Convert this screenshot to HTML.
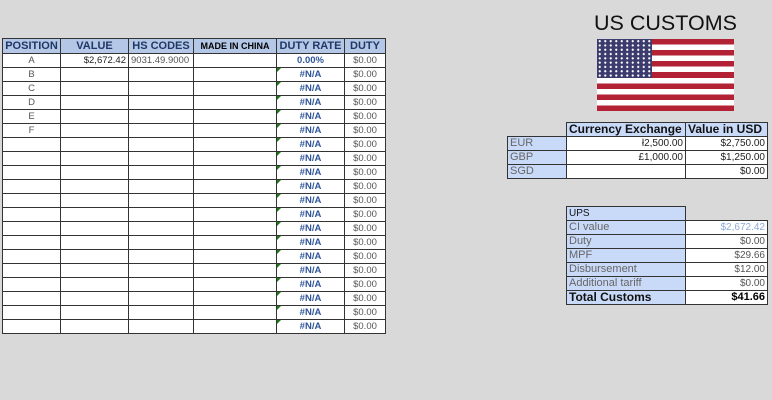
<!DOCTYPE html>
<html><head><meta charset="utf-8"><style>
body{margin:0;width:772px;height:400px;background:#d9d9d9;position:relative;overflow:hidden;font-family:"Liberation Sans",sans-serif;}
table{position:absolute;border-collapse:collapse;table-layout:fixed;}
td{border:1px solid #333;padding:0 2px;height:13px;font-size:9.5px;line-height:13px;white-space:nowrap;overflow:hidden;background:#fff;color:#555;}
#t1 td{text-align:center}
#t1 tr.h td{background:#b4c7e7;color:#1f3864;font-weight:bold;font-size:11px;height:14px;line-height:14px;}
#t1 td.r{text-align:right}
#t1 td.l{text-align:left}
#t1 td.na{color:#2f5597;font-weight:bold;position:relative}
#t1 td.na:before{content:"";position:absolute;left:0;top:0;border-top:4px solid #1a7a1a;border-right:4px solid transparent}
.rt td{font-size:11px;}
.lab{background:#c9daf8!important;color:#666;text-align:left}
.hd{background:#c9daf8!important;color:#111!important;font-weight:bold;font-size:12px!important}
.num{text-align:right;color:#222}
.rt .num{font-size:10px}
.flag{position:absolute;left:597px;top:39px;width:137px;height:72px;background:repeating-linear-gradient(#b22234 0 5.54px,#fff 5.54px 11.08px)}
.cant{position:absolute;left:0;top:0;width:55px;height:38.8px;background:#3c3b6e radial-gradient(circle,#fff 0.9px,transparent 1.3px) 0 0/5.5px 4.3px}
</style></head><body>
<div style="position:absolute;left:594px;top:11px;font-size:21.5px;color:#111;">US CUSTOMS</div>
<div class="flag"><div class="cant"></div></div>
<table id="t1" style="left:2px;top:38px;width:383px">
<colgroup><col style="width:58px"><col style="width:68px"><col style="width:65px"><col style="width:83px"><col style="width:68px"><col style="width:41px"></colgroup>
<tr class="h"><td>POSITION</td><td>VALUE</td><td>HS CODES</td><td style="font-size:9px;color:#000">MADE IN CHINA</td><td>DUTY RATE</td><td>DUTY</td></tr>
<tr><td>A</td><td class="r" style="color:#222">$2,672.42</td><td class="l">9031.49.9000</td><td></td><td style="color:#2f5597;font-weight:bold">0.00%</td><td>$0.00</td></tr>
<tr><td>B</td><td></td><td></td><td></td><td class="na">#N/A</td><td>$0.00</td></tr>
<tr><td>C</td><td></td><td></td><td></td><td class="na">#N/A</td><td>$0.00</td></tr>
<tr><td>D</td><td></td><td></td><td></td><td class="na">#N/A</td><td>$0.00</td></tr>
<tr><td>E</td><td></td><td></td><td></td><td class="na">#N/A</td><td>$0.00</td></tr>
<tr><td>F</td><td></td><td></td><td></td><td class="na">#N/A</td><td>$0.00</td></tr>
<tr><td></td><td></td><td></td><td></td><td class="na">#N/A</td><td>$0.00</td></tr>
<tr><td></td><td></td><td></td><td></td><td class="na">#N/A</td><td>$0.00</td></tr>
<tr><td></td><td></td><td></td><td></td><td class="na">#N/A</td><td>$0.00</td></tr>
<tr><td></td><td></td><td></td><td></td><td class="na">#N/A</td><td>$0.00</td></tr>
<tr><td></td><td></td><td></td><td></td><td class="na">#N/A</td><td>$0.00</td></tr>
<tr><td></td><td></td><td></td><td></td><td class="na">#N/A</td><td>$0.00</td></tr>
<tr><td></td><td></td><td></td><td></td><td class="na">#N/A</td><td>$0.00</td></tr>
<tr><td></td><td></td><td></td><td></td><td class="na">#N/A</td><td>$0.00</td></tr>
<tr><td></td><td></td><td></td><td></td><td class="na">#N/A</td><td>$0.00</td></tr>
<tr><td></td><td></td><td></td><td></td><td class="na">#N/A</td><td>$0.00</td></tr>
<tr><td></td><td></td><td></td><td></td><td class="na">#N/A</td><td>$0.00</td></tr>
<tr><td></td><td></td><td></td><td></td><td class="na">#N/A</td><td>$0.00</td></tr>
<tr><td></td><td></td><td></td><td></td><td class="na">#N/A</td><td>$0.00</td></tr>
<tr><td></td><td></td><td></td><td></td><td class="na">#N/A</td><td>$0.00</td></tr>
</table>
<table class="rt" style="left:507px;top:122px;width:260px">
<colgroup><col style="width:59px"><col style="width:119px"><col style="width:82px"></colgroup>
<tr><td style="border:none;background:transparent"></td><td class="hd">Currency Exchange</td><td class="hd">Value in USD</td></tr>
<tr><td class="lab">EUR</td><td class="num">ł2,500.00</td><td class="num">$2,750.00</td></tr>
<tr><td class="lab">GBP</td><td class="num">£1,000.00</td><td class="num">$1,250.00</td></tr>
<tr><td class="lab">SGD</td><td class="num"></td><td class="num">$0.00</td></tr>
</table>
<table class="rt" style="left:566px;top:206px;width:201px">
<colgroup><col style="width:119px"><col style="width:82px"></colgroup>
<tr><td class="lab" style="color:#111;font-size:10px">UPS</td><td style="border:none;background:transparent"></td></tr>
<tr><td class="lab">CI value</td><td class="num" style="color:#8ea9db">$2,672.42</td></tr>
<tr><td class="lab">Duty</td><td class="num" style="color:#555">$0.00</td></tr>
<tr><td class="lab">MPF</td><td class="num" style="color:#555">$29.66</td></tr>
<tr><td class="lab">Disbursement</td><td class="num" style="color:#555">$12.00</td></tr>
<tr><td class="lab">Additional tariff</td><td class="num" style="color:#555">$0.00</td></tr>
<tr><td class="hd">Total Customs</td><td class="num" style="font-weight:bold;color:#000;font-size:11px">$41.66</td></tr>
</table>
</body></html>
